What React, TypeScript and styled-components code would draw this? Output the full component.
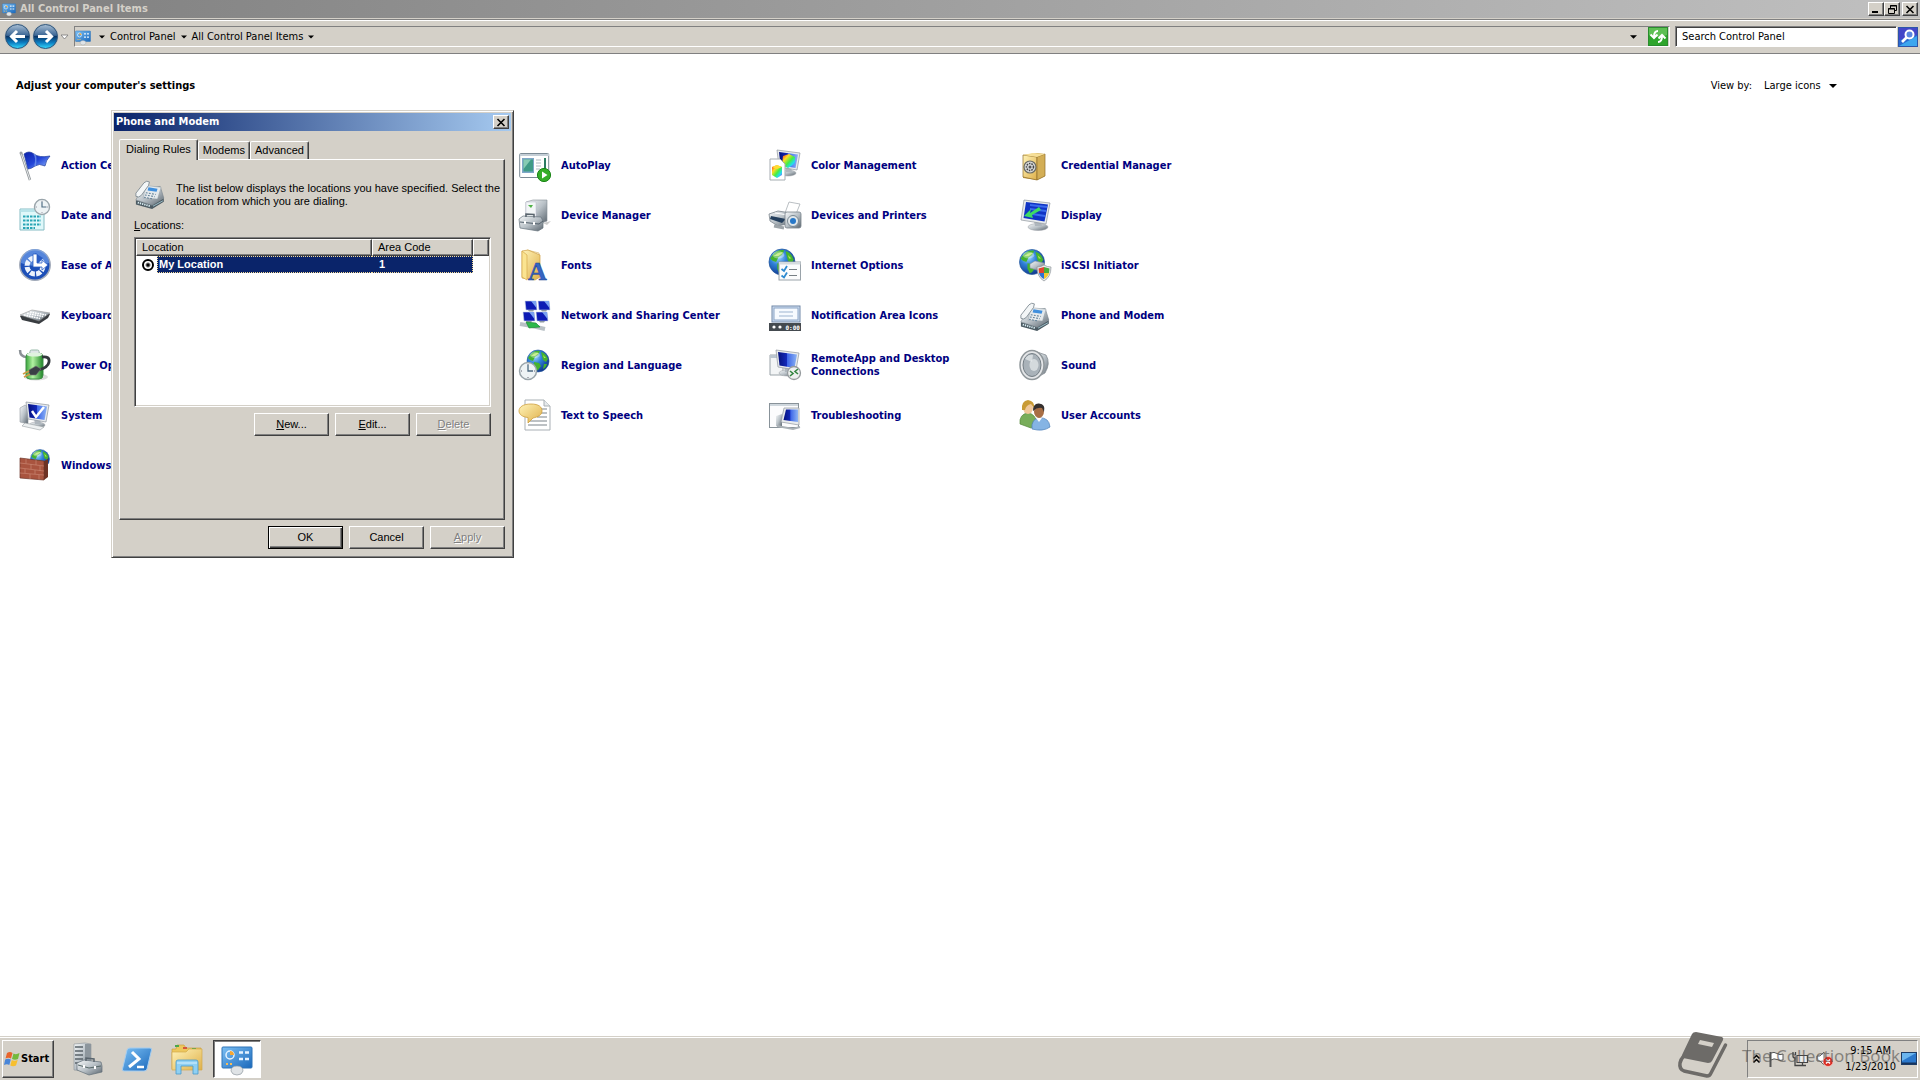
import React from "react";
import styled, { createGlobalStyle, css } from "styled-components";

const ui = `"DejaVu Sans Condensed", "DejaVu Sans", sans-serif`;
const face = "#d4d0c8";

const Global = createGlobalStyle`
  * { box-sizing: border-box; }
  body { margin: 0; background: #fff; color: #000; font: 11px/14px ${ui}; overflow: hidden; }
  button, input, select { font: inherit; color: inherit; margin: 0; padding: 0; }
  svg { display: block; flex: none; overflow: visible; }
`;

const raised = css`
  border: 1px solid;
  border-color: #fff #404040 #404040 #fff;
  box-shadow: inset -1px -1px #808080;
`;
const sunken = css`
  border: 1px solid;
  border-color: #808080 #fff #fff #808080;
`;

/* ---------- explorer window ---------- */

const Desktop = styled.div`
  min-height: 100vh;
  display: flex;
  flex-direction: column;
  position: relative;
`;
const TitleBar = styled.header`
  display: flex;
  align-items: center;
  gap: 4px;
  height: 18px;
  padding: 0 2px;
  background: linear-gradient(90deg, #808080, #c0c0c0);
  color: ${face};
  font-weight: bold;
`;
const WindowTitle = styled.h1`
  flex: 1;
  margin: 0;
  font: bold 11px/14px ${ui};
`;
const Captions = styled.div`
  display: flex;
  align-items: center;
`;
const CaptionButton = styled.button<{ $apart?: boolean }>`
  ${raised}
  width: 16px;
  height: 14px;
  margin-left: ${(p) => (p.$apart ? 2 : 0)}px;
  background: ${face};
  color: #000;
  display: grid;
  place-items: center;
`;
const Toolbar = styled.nav`
  display: flex;
  align-items: center;
  height: 36px;
  padding: 1px 2px 0 4px;
  background: ${face};
  border-top: 1px solid ${face};
  border-bottom: 1px solid #808080;
  box-shadow: inset 0 1px #808080, inset 0 2px #fff;
`;
const Plain = styled.button`
  border: 0;
  background: none;
  display: grid;
  place-items: center;
`;
const RoundPair = styled.div`
  display: flex;
  align-items: center;
  gap: 1px;
  margin-right: 5px;
`;
const Address = styled.div`
  ${sunken}
  flex: 1;
  height: 21px;
  display: flex;
  align-items: center;
  gap: 8px;
  padding-right: 1px;
`;
const Crumbs = styled.div`
  display: flex;
  align-items: center;
  gap: 5px;
`;
const Crumb = styled.a`
  color: #000;
  text-decoration: none;
`;
const AddressEnd = styled.div`
  margin-left: auto;
  display: flex;
  align-items: center;
  gap: 11px;
`;
const Search = styled.label`
  display: flex;
  align-items: center;
  margin-left: 5px;
  gap: 1px;
`;
const SearchInput = styled.input`
  width: 222px;
  height: 21px;
  padding: 0 6px;
  background: #fff;
  border: 1px solid;
  border-color: #808080 #fff #fff #808080;
  box-shadow: inset 1px 1px #404040;
  outline: 0;
  &::placeholder { color: #000; opacity: 1; }
`;
const Content = styled.main`
  flex: 1;
`;
const SettingsHead = styled.div`
  display: flex;
  align-items: center;
  justify-content: space-between;
  padding: 24px 83px 46px 16px;
`;
const Heading = styled.h2`
  margin: 0;
  font: bold 11px/16px ${ui};
`;
const ViewBy = styled.div`
  display: flex;
  align-items: center;
  gap: 12px;
`;
const ViewSelect = styled.span`
  display: flex;
  align-items: center;
  gap: 8px;
`;
const Select = styled.select`
  appearance: none;
  border: 0;
  background: none;
  outline: 0;
`;
const Items = styled.ul`
  list-style: none;
  margin: 0;
  padding: 0 19px;
  display: grid;
  grid-template-columns: repeat(5, 250px);
  grid-auto-rows: 50px;
`;
const Item = styled.li<{ $wide: boolean }>`
  grid-column: span ${(p) => (p.$wide ? 2 : 1)};
  display: flex;
  align-items: center;
`;
const ItemLink = styled.a`
  display: flex;
  align-items: center;
  gap: 10px;
  max-width: 220px;
  color: #000080;
  font: bold 11px/13px ${ui};
  text-decoration: none;
`;

/* ---------- dialog ---------- */

const Dialog = styled.section`
  position: absolute;
  left: 111px;
  top: 110px;
  width: 403px;
  padding: 2px;
  background: ${face};
  border: 1px solid;
  border-color: ${face} #404040 #404040 ${face};
  box-shadow: inset 1px 1px #fff, inset -1px -1px #808080;
  font: 11px/13px "Liberation Sans", Arial, sans-serif;
`;
const DialogTitle = styled.div`
  display: flex;
  align-items: center;
  justify-content: space-between;
  height: 18px;
  padding: 0 2px;
  color: #fff;
  background: linear-gradient(90deg, #0a246a, #a6caf0);
  font: bold 11px/14px ${ui};
`;
const DialogBody = styled.div`
  padding: 8px 6px 6px 5px;
`;
const Tabs = styled.div`
  display: flex;
  align-items: flex-end;
`;
const Tab = styled.button<{ $on?: boolean }>`
  height: ${(p) => (p.$on ? 21 : 18)}px;
  margin-bottom: ${(p) => (p.$on ? -1 : 0)}px;
  padding: 0 ${(p) => (p.$on ? 6 : 4)}px ${(p) => (p.$on ? 2 : 0)}px;
  position: relative;
  z-index: ${(p) => (p.$on ? 1 : 0)};
  background: ${face};
  border: 1px solid;
  border-color: #fff #404040 transparent #fff;
  border-bottom-width: 0;
  border-radius: 2px 2px 0 0;
  box-shadow: inset -1px 0 #808080;
`;
const Panel = styled.div`
  ${raised}
  height: 361px;
  padding: 17px 13px 0 14px;
`;
const Intro = styled.div`
  display: flex;
  gap: 10px;
  margin: 0 -10px 10px 0;
`;
const IntroText = styled.p`
  margin: 5px 0 0;
`;
const ListLabel = styled.div`
  margin-bottom: 5px;
`;
const ListBox = styled.div`
  height: 170px;
  background: #fff;
  border: 1px solid;
  border-color: #808080 #fff #fff #808080;
  box-shadow: inset 1px 1px #404040, inset -1px -1px ${face};
  padding: 1px;
`;
const Table = styled.table`
  width: 100%;
  table-layout: fixed;
  border-collapse: separate;
  border-spacing: 0;
`;
const Th = styled.th<{ $w?: number }>`
  ${raised}
  ${(p) => (p.$w ? `width: ${p.$w}px;` : "")}
  height: 17px;
  padding: 0 5px;
  background: ${face};
  font-weight: normal;
  text-align: left;
`;
const Td = styled.td`
  height: 17px;
  padding: 0;
  font-weight: bold;
`;
const Choice = styled.label`
  display: flex;
  align-items: center;
  gap: 3px;
  padding-left: 6px;
`;
const Radio = styled.input`
  appearance: none;
  width: 12px;
  height: 12px;
  border: 2px solid #000;
  border-radius: 50%;
  background: radial-gradient(circle, #000 1px, #fff 3px);
`;
const Picked = styled.span<{ $code?: boolean }>`
  display: block;
  flex: 1;
  height: 17px;
  padding: 1px ${(p) => (p.$code ? 7 : 1)}px;
  color: #fff;
  background: #0a246a;
  border: 1px dotted #f5db95;
  border-${(p) => (p.$code ? "left" : "right")}: 0;
`;
const Buttons = styled.div`
  display: flex;
  justify-content: flex-end;
  gap: 6px;
  margin-top: 6px;
`;
const Push = styled.button<{ $primary?: boolean }>`
  ${raised}
  width: 75px;
  height: 23px;
  background: ${face};
  ${(p) =>
    p.$primary &&
    css`
      border-color: #000;
      box-shadow: inset 1px 1px #fff, inset -1px -1px #404040, inset -2px -2px #808080;
    `}
  &:disabled { color: #808080; text-shadow: 1px 1px #fff; }
`;

/* ---------- taskbar ---------- */

const Taskbar = styled.footer`
  display: flex;
  align-items: center;
  height: 44px;
  padding: 1px 2px;
  background: ${face};
  border-top: 1px solid ${face};
  box-shadow: inset 0 1px #fff;
`;
const Start = styled.button`
  ${raised}
  display: flex;
  align-items: center;
  gap: 1px;
  width: 52px;
  height: 38px;
  padding-left: 1px;
  background: ${face};
  font: bold 11px/14px ${ui};
`;
const Launchers = styled.div`
  display: flex;
  align-items: center;
  gap: 2px;
  margin-left: 9px;
  flex: 1;
`;
const Launcher = styled.button<{ $active?: boolean }>`
  width: 48px;
  height: 38px;
  display: grid;
  place-items: center;
  background: ${(p) => (p.$active ? "#fff" : "none")};
  border: 1px solid transparent;
  ${(p) =>
    p.$active &&
    css`
      border-color: #404040 #fff #fff #404040;
      box-shadow: inset 1px 1px #808080;
    `}
`;
const Tray = styled.div`
  ${sunken}
  display: flex;
  align-items: center;
  gap: 8px;
  height: 38px;
  padding: 0 0 0 5px;
`;
const Clock = styled.time`
  text-align: center;
  line-height: 16px;
  margin: 0 -3px 0 3px;
`;
const Watermark = styled.div`
  position: absolute;
  right: 20px;
  bottom: 1px;
  display: flex;
  align-items: center;
  gap: 14px;
  color: rgba(80, 78, 74, 0.6);
  font: 17px/20px "Noto Sans", sans-serif;
  pointer-events: none;
`;

/* ---------- drawings ---------- */

const HiddenSvg = styled.svg`
  position: absolute;
  width: 0;
  height: 0;
`;

const Defs = () => (
  <HiddenSvg aria-hidden="true">
    <defs>
      <linearGradient id="blue" x1="0" y1="0" x2="1" y2="1">
        <stop offset="0" stopColor="#0b1fa8" /><stop offset=".5" stopColor="#2345d8" /><stop offset="1" stopColor="#9cc4ff" />
      </linearGradient>
      <linearGradient id="screen" x1="0" y1="0" x2="1" y2="0">
        <stop offset="0" stopColor="#04107c" /><stop offset=".45" stopColor="#1228b8" /><stop offset=".5" stopColor="#3d66e8" /><stop offset="1" stopColor="#8db4f4" />
      </linearGradient>
      <radialGradient id="globe" cx=".35" cy=".3" r=".8">
        <stop offset="0" stopColor="#a5dcff" /><stop offset=".4" stopColor="#2f80d8" /><stop offset="1" stopColor="#0a2b80" />
      </radialGradient>
      <linearGradient id="metal" x1="0" y1="0" x2="1" y2="1">
        <stop offset="0" stopColor="#f6f8f9" /><stop offset=".5" stopColor="#b9c1c7" /><stop offset="1" stopColor="#59646d" />
      </linearGradient>
      <linearGradient id="nav" x1="0" y1="0" x2="0" y2="1">
        <stop offset="0" stopColor="#a9bfd4" /><stop offset=".45" stopColor="#3c6796" /><stop offset=".5" stopColor="#0b3768" /><stop offset=".75" stopColor="#0c7cc0" /><stop offset="1" stopColor="#35dcff" />
      </linearGradient>
      <linearGradient id="gold" x1="0" y1="0" x2="1" y2="1">
        <stop offset="0" stopColor="#fff3b8" /><stop offset="1" stopColor="#dfb04a" />
      </linearGradient>
      <linearGradient id="green" x1="0" y1="0" x2="1" y2="0">
        <stop offset="0" stopColor="#3aa53c" /><stop offset=".4" stopColor="#b2f2a2" /><stop offset="1" stopColor="#1f8428" />
      </linearGradient>
      <linearGradient id="panel" x1="0" y1="0" x2="1" y2="1">
        <stop offset="0" stopColor="#7cc0f4" /><stop offset="1" stopColor="#1a68bb" />
      </linearGradient>
      <linearGradient id="rainbow" x1="0" y1="0" x2="1" y2="1">
        <stop offset="0" stopColor="#f22" /><stop offset=".3" stopColor="#fd2" /><stop offset=".55" stopColor="#4e4" /><stop offset=".75" stopColor="#2de" /><stop offset="1" stopColor="#b3f" />
      </linearGradient>
    </defs>
  </HiddenSvg>
);

const Globe = ({ x, y, r }: { x: number; y: number; r: number }) => (
  <g transform={`translate(${x} ${y}) scale(${r / 11})`}>
    <circle r="11" fill="url(#globe)" stroke="#24559b" strokeWidth=".6" />
    <path d="M-8-6Q-4-11 2-10L0-6-3-4-5 0-8-1-10-3ZM3-9Q8-8 10-2L8 1 5-1 4-5ZM-4 1L1 2 3 5 0 9-2 10-4 6ZM6 3L9 3Q8 7 5 8Z" fill="#45b32f" />
    <path d="M-7-5Q-3-9 1-8L-3-5ZM5-6 8-3 6-3Z" fill="#b1e659" />
    <ellipse cx="-3" cy="-6" rx="5" ry="3" fill="#fff" opacity=".35" />
  </g>
);
const Monitor = ({ x = 0, y = 0, s = 1 }: { x?: number; y?: number; s?: number }) => (
  <g transform={`translate(${x} ${y}) scale(${s})`}>
    <ellipse cx="14" cy="23" rx="8" ry="3" fill="url(#metal)" stroke="#9a9fa4" strokeWidth=".5" />
    <path d="M11 16h6l1 6h-6z" fill="#aeb6bd" />
    <path d="M3 0 26 3 23 20 5 17Z" fill="#e8ebed" stroke="#8f979e" strokeWidth=".7" />
    <path d="M5 2 24 4.500 21.500 18 6.500 15.500Z" fill="url(#screen)" />
  </g>
);
const Face = ({ x, y, r }: { x: number; y: number; r: number }) => (
  <g transform={`translate(${x} ${y}) scale(${r / 9})`}>
    <circle r="8.500" fill="#eef3f5" stroke="#9aa5ab" strokeWidth="1.500" />
    <path d="M0-6V0H5" fill="none" stroke="#4c6a80" strokeWidth="1.300" />
    <path d="M0-7v1M0 6v1M-7 0h1M6 0h1" stroke="#667" />
  </g>
);

const Phone = () => (
  <g transform="translate(1 4) scale(.9)">
    <path d="M1 21 19 26 32 19 32 23 19 31 1 26Z" fill="#4c5b63" />
    <path d="M1 21 8 8 28 6 32 19 19 27Z" fill="url(#metal)" stroke="#7b868e" strokeWidth=".7" />
    <path d="M12 5 29 7 25 20 9 19Z" fill="#e4e9ec" stroke="#8f9aa1" strokeWidth=".5" />
    <path d="M15 7 25 8.500 24 12 14 10.500Z" fill="#3f8fdd" />
    <path d="M12 13l11 2M11 15.500l11 2M10 18l10 2" stroke="#5f7f96" strokeWidth="1.200" strokeDasharray="2 1.500" />
    <path d="M1 17Q0 13 3 11L10 2Q13-1 16 1L15 5 7 16Q4 19 1 17Z" fill="#f3f6f7" stroke="#74818a" strokeWidth=".9" />
    <path d="M3 24 17 28" stroke="#d8ecf2" strokeWidth="2" strokeDasharray="1.500 1" />
    <path d="M20 28 31 22" stroke="#a5c7d3" />
  </g>
);

const art: Record<string, React.ReactNode> = {
  flag: (
    <>
      <path d="M2 4 11 31" stroke="#8f9599" strokeWidth="2.400" />
      <path d="M2 4 11 31" stroke="#e5e7e8" strokeWidth="1" />
      <circle cx="2" cy="4" r="1.500" fill="#9ba1a5" />
      <path d="M5 5Q10 1 15 5T31 7Q27 11 26 17Q20 14 16 17T9 20Z" fill="url(#blue)" stroke="#1c3b9c" strokeWidth=".7" />
      <path d="M15 5Q18 8 16 17" fill="none" stroke="#7aa0f0" strokeWidth="1.500" opacity=".7" />
    </>
  ),
  date: (
    <>
      <path d="M1 10H25V31H1Z" fill="#dff8fa" stroke="#86bcc4" />
      <path d="M1.500 10.500H24.500V13H1.500Z" fill="#b9e4ea" />
      <path d="M4 17.500H22M4 21.500H22M4 25.500H22M4 29H16" stroke="#29a5b5" strokeWidth="2.200" strokeDasharray="2.500 1" />
      <Face x={23} y={8} r={8} />
    </>
  ),
  ease: (
    <>
      <circle cx="16" cy="16" r="15.200" fill="#1c4fb8" stroke="#a2aab8" strokeWidth="1.500" />
      <path d="M2 14A14 14 0 0 1 30 14Q16 20 2 14Z" fill="#6f9eea" opacity=".7" />
      <circle cx="16" cy="17" r="8" fill="none" stroke="#edf3fc" strokeWidth="5" strokeDasharray="5 1.300" />
      <path d="M16 4 24 9 18 15Z" fill="#2a5dc4" />
      <path d="M14 5h4v9h5v-3l6 5-6 5v-3h-9Z" fill="#fff" stroke="#2a5dc4" strokeWidth=".8" />
    </>
  ),
  keyboard: (
    <>
      <path d="M1 17 14 12 31 15 29 19 20 25 3 21Z" fill="#393d41" />
      <path d="M1 16 13 11 31 14 20 22Z" fill="url(#metal)" stroke="#888" strokeWidth=".5" />
      <path d="M5 16 21 19.500M8 14.500 24 17.500M11 13 27 16" stroke="#fff" strokeWidth="1.500" strokeDasharray="1.800 .7" />
    </>
  ),
  power: (
    <>
      <ellipse cx="17" cy="28" rx="12" ry="3.500" fill="#ccc" opacity=".7" />
      <path d="M1 1Q1 8 8 8" fill="none" stroke="#8b9196" strokeWidth="2.500" />
      <rect x="7" y="4" width="17" height="26" rx="4" fill="url(#green)" stroke="#3f8f46" />
      <rect x="11" y="1" width="9" height="4" rx="1.500" fill="#dfe5e8" stroke="#9ba" />
      <ellipse cx="15.500" cy="5.500" rx="8" ry="2" fill="#dff3df" />
      <path d="M23 8Q31 7 30 13T19 21" fill="none" stroke="#33383d" strokeWidth="2.800" />
      <path d="M10 21 17 17 22 20 17 26 10 26Z" fill="#3a3f45" stroke="#777" strokeWidth=".6" />
      <path d="M4 25 10 22M5 28 11 25" stroke="#cf9a44" strokeWidth="1.800" />
    </>
  ),
  system: (
    <>
      <path d="M1 9 6 6 9 8V25L1 23Z" fill="url(#metal)" stroke="#959ca1" strokeWidth=".6" />
      <Monitor x={4} y={3} />
      <path d="M13 12 17 18 25 8" fill="none" stroke="#fff" strokeWidth="2.500" />
      <path d="M6 24 25 28 21 31 3 27Z" fill="#eef1f2" stroke="#9ba1a5" strokeWidth=".6" />
    </>
  ),
  firewall: (
    <>
      <Globe x={21} y={10} r={9.500} />
      <path d="M1 9 25 12V31L1 29Z" fill="#a9543f" stroke="#6d3528" strokeWidth=".7" />
      <path d="M25 12 29 10V28L25 31Z" fill="#6d3224" />
      <path d="M1 14 25 17M1 19 25 22M1 24 25 26M7 10V14.500M17 11V16M12 15V20M21 17V22M6 20V24M16 21V25M11 25V30M20 26V30.500" stroke="#cf8d79" strokeWidth=".6" />
    </>
  ),
  autoplay: (
    <>
      <rect x=".7" y="4.500" width="29" height="24" rx="1" fill="#fff" stroke="#7c8b95" />
      <path d="M1 5H30V7H1Z" fill="#c4ced6" />
      <path d="M3 9H15V24H3Z" fill="#7fa7c8" /><path d="M4.500 10.500H14V22.500H4.500Z" fill="#3f9b86" /><path d="M4.500 10.500H12L4.500 20Z" fill="#86cbb3" />
      <path d="M17 11h5M17 14h5M17 17h5M17 20h4" stroke="#aeb9c0" /><path d="M26 9V20" stroke="#2c7b62" strokeWidth="2" />
      <circle cx="25" cy="26" r="6.600" fill="#35ad27" stroke="#1c8618" /><path d="M23 22.500 28.500 26 23 29.500Z" fill="#fff" />
    </>
  ),
  device: (
    <>
      <path d="M7 3 14 1 28 1 28 22 20 25 7 22Z" fill="url(#metal)" stroke="#858d93" strokeWidth=".6" />
      <path d="M7 3 17 3V22H7Z" fill="#f3f6f7" stroke="#bbc" strokeWidth=".5" /><path d="M9 6 14 6 12 9Z" fill="#51b247" />
      <path d="M24 24 32 22 28 26Z" fill="#ccc" />
      <path d="M0 20 4 17 22 18 24 22V29L19 32 1 29Z" fill="url(#metal)" stroke="#66727c" strokeWidth=".7" />
      <path d="M7 18V15L15 15.500V18.500" fill="none" stroke="#59646d" strokeWidth="1.500" />
      <path d="M1 23 20 25 24 22" fill="none" stroke="#54616c" /><path d="M6 22v3M15 23v3" stroke="#fff" strokeWidth="2" />
    </>
  ),
  fonts: (
    <>
      <path d="M8 1 20 4V26H8Z" fill="#fff" stroke="#d8b562" strokeWidth=".7" />
      <path d="M3 2 9 1 21 6V28L16 31 3 29Z" fill="url(#gold)" stroke="#cf9f43" strokeWidth=".7" />
      <path d="M3 2 8 6V31L3 28Z" fill="#fbe491" stroke="#d5a94c" strokeWidth=".7" />
      <text x="9" y="31" fontFamily="Liberation Serif, serif" fontSize="26" fontWeight="bold" fill="#3565c4" stroke="#1d3e8e" strokeWidth=".5">A</text>
    </>
  ),
  network: (
    <>
      {[[5, 2], [18, 2], [3, 13], [16, 13]].map(([x, y]) => (
        <g key={`${x}-${y}`} transform={`translate(${x} ${y})`}>
          <path d="M1 0H12L13 9H2Z" fill="#0d1bb4" stroke="#c6d4e4" strokeWidth=".6" />
          <path d="M7 0H12L12.500 7Z" fill="#7aa1f1" /><path d="M4 9H10L9 10.500H5Z" fill="#8e99a3" />
        </g>
      ))}
      <path d="M1 25 13 27 26 30" stroke="#b9c1c6" strokeWidth="4" />
      <path d="M7 23 17 24 21 28 10 29Z" fill="#2cb84a" stroke="#14802b" strokeWidth=".6" />
    </>
  ),
  region: (<><Globe x={19} y={12} r={11} /><Face x={9} y={22} r={9} /></>),
  speech: (
    <>
      <path d="M6 1H25L31 7V31H6Z" fill="#fff" stroke="#a9b0b5" /><path d="M25 1V7H31" fill="#e5e9ec" stroke="#a9b0b5" />
      <path d="M15 10H28M20 14H28M18 18H28M9 22H28M9 26H28" stroke="#7b8389" />
      <path d="M12 5C20 5 23 8 23 12C23 16 19 18 14 19L9 24 9 18.500C3 18 0 15 0 12C0 8 4 5 12 5Z" fill="url(#gold)" stroke="#ce9e3c" strokeWidth=".8" />
    </>
  ),
  color: (
    <>
      <Monitor x={5} y={1} />
      <path d="M14 7 20 5 26 8V15L19 19 13 16Z" fill="url(#rainbow)" />
      <path d="M1 10H11L16 15V31H1Z" fill="#fff" stroke="#a6adb2" />
      <path d="M3 18 8 16 13 18V26L8 29 3 26Z" fill="url(#rainbow)" /><path d="M3 18 8 20 13 18 8 16Z" fill="#fd3" />
    </>
  ),
  printers: (
    <>
      <path d="M16 14 20 3 31 5 27 15Z" fill="#fff" stroke="#a8afb4" strokeWidth=".8" />
      <path d="M0 15 9 12 22 14 22 24 9 27 1 22Z" fill="url(#metal)" stroke="#6d777f" strokeWidth=".7" />
      <path d="M2 17 17 20 13 24 1 20Z" fill="#243f5d" /><path d="M6 14 19 16" stroke="#fff" />
      <rect x="16" y="13" width="16" height="16" rx="2" fill="url(#metal)" stroke="#79838b" strokeWidth=".8" />
      <circle cx="24" cy="22" r="5.500" fill="#dfe6ea" stroke="#7a8891" /><circle cx="24" cy="22" r="3" fill="#2878c8" />
      <path d="M5 27 15 29" stroke="#9da4a9" strokeWidth="3" />
    </>
  ),
  internet: (
    <>
      <Globe x={13} y={13} r={13} />
      <rect x="10" y="13" width="21.500" height="18" fill="#fbfcfd" stroke="#9aa3aa" /><path d="M10 13H31.500V15.500H10Z" fill="#d5dbdf" />
      <path d="M12.500 20 15 22 18 17M12.500 26.500 15 28.500 18 23.500" fill="none" stroke="#2f8bd0" strokeWidth="1.800" />
      <path d="M20 20.500H28M20 26.500H28" stroke="#777f85" />
    </>
  ),
  tray: (
    <>
      <rect x="3" y="7" width="28" height="16" fill="#d2e0f2" stroke="#7088a8" /><rect x="5" y="9" width="24" height="12" fill="#f6faff" stroke="#8aa4c6" />
      <path d="M10 13H24M10 17H24" stroke="#9db4d0" />
      <path d="M0 24H32V32H0Z" fill="#444a4f" /><circle cx="5" cy="28" r="1.600" fill="#fff" /><circle cx="11" cy="28" r="1.600" fill="#fff" />
      <text x="16.500" y="30.500" fontFamily="DejaVu Sans Mono, monospace" fontSize="6" fontWeight="bold" fill="#fff">0:00</text>
    </>
  ),
  remote: (
    <>
      <path d="M1 6H14V26H1Z" fill="#f3f5f6" stroke="#9aa3a9" /><path d="M1 6H14V9H1Z" fill="#bac5cf" />
      <Monitor x={4} y={1} />
      <circle cx="25" cy="24" r="6.500" fill="#eef0f0" stroke="#969b9e" strokeWidth="1.300" />
      <path d="M21 22 24 24.500 21 27M29 20 26 22.500 29 25" fill="none" stroke="#348541" strokeWidth="1.600" />
    </>
  ),
  trouble: (
    <>
      <rect x=".5" y="4.500" width="29" height="24" fill="#fcfcfd" stroke="#889299" /><path d="M1 5H29V7H1Z" fill="#cfd7dd" />
      <path d="M7 17 13 15V28L7 27Z" fill="url(#metal)" />
      <path d="M15 9H30V26L12 23Z" fill="#e8ebed" stroke="#8f979e" strokeWidth=".7" /><path d="M17 10.500H29V23L14.500 21Z" fill="url(#screen)" />
      <path d="M8 27 24 30 31 28" fill="none" stroke="#aab1b6" strokeWidth="2" />
    </>
  ),
  credential: (
    <>
      <path d="M4 6 18 4 26 5V27L18 31 4 29Z" fill="#c29b45" /><path d="M4 6 18 8V31L4 28Z" fill="url(#gold)" stroke="#8f6d2a" strokeWidth=".7" />
      <path d="M18 8 26 5V27L18 31Z" fill="#d3ae56" stroke="#8f6d2a" strokeWidth=".7" /><path d="M4 6 14 4 26 5 18 8Z" fill="#f6df98" />
      <circle cx="11" cy="18" r="6" fill="#d8dadb" stroke="#6b6b64" strokeWidth="1.200" /><circle cx="11" cy="18" r="3.500" fill="none" stroke="#444" strokeWidth="1.500" strokeDasharray="1.500 1" /><circle cx="11" cy="18" r="1.500" fill="#555" />
    </>
  ),
  display: (
    <>
      <ellipse cx="19" cy="28" rx="10" ry="3.500" fill="url(#metal)" stroke="#9a9fa4" strokeWidth=".5" />
      <path d="M15 22h7l1 5h-7z" fill="#aeb6bd" />
      <path d="M5 1 31 4 27 25 2 21Z" fill="#e8ebed" stroke="#8f979e" strokeWidth=".7" />
      <path d="M7 3 29 5.500 25.500 22.500 4.500 19Z" fill="#1034c4" /><path d="M11 6 28 8M11 10 27 12M13 15 26 17" stroke="#3a6bee" strokeWidth="2" />
      <path d="M20 8 11 14 12 10 5 17 14 19 13 16 22 11Z" fill="#3ddb63" />
    </>
  ),
  iscsi: (
    <>
      <Globe x={13} y={13} r={12.500} />
      <path d="M11 15 16 12 25 14V19L18 21 11 19Z" fill="url(#metal)" stroke="#8a939a" strokeWidth=".6" />
      <path d="M18 18Q22 18 25 16Q28 18 32 18Q32 28 25 32Q18 28 18 18Z" fill="#e8eaec" stroke="#8d9499" strokeWidth=".7" />
      <path d="M19.500 19.500 25 18V24H20Z" fill="#e2452f" /><path d="M25 18 30.500 19.500 30 24H25Z" fill="#49ad3c" /><path d="M20 24H25V30Q21 28 20 24Z" fill="#2f72d4" /><path d="M25 24H30Q29 28 25 30Z" fill="#f4c830" />
    </>
  ),
  phone: <Phone />,
  sound: (
    <>
      <path d="M15 2 27 6Q32 14 26 24L15 30Z" fill="url(#metal)" stroke="#7f878c" strokeWidth=".7" />
      <ellipse cx="13" cy="16" rx="12" ry="14.500" fill="#e4e6e8" stroke="#90979b" strokeWidth="1.500" />
      <ellipse cx="13" cy="16" rx="9" ry="11.500" fill="#a9b2b9" stroke="#737d84" />
      <ellipse cx="15" cy="16" rx="4.500" ry="6" fill="#d4dadd" /><path d="M6 10Q9 5 14 6L13 13Z" fill="#e8ecee" opacity=".7" />
    </>
  ),
  users: (
    <>
      <path d="M1 25Q0 15 9 14Q17 15 18 25L12 29Z" fill="#78ad5a" stroke="#55873b" strokeWidth=".7" />
      <ellipse cx="9" cy="9" rx="5" ry="6" fill="#efc79a" /><path d="M3 11Q2 2 9 1Q16 2 15 9L12 5Q7 6 6 11Z" fill="#c99b35" />
      <path d="M13 30Q12 20 20 19Q30 18 31 28Q24 33 13 30Z" fill="#85b4e4" stroke="#4d7fb8" strokeWidth=".7" />
      <ellipse cx="20" cy="12.500" rx="5" ry="6.500" fill="#a86e45" /><path d="M14 12Q14 4 20 4.500Q27 5 25 13L23 9Q18 8 14 12Z" fill="#35302f" />
      <path d="M17 19 20 23 23 19Z" fill="#fff" />
    </>
  ),
  cpl: (
    <>
      <rect x="1" y="4" width="30" height="21" rx="1" fill="url(#panel)" stroke="#2f74b8" />
      <circle cx="9" cy="12" r="4" fill="none" stroke="#e3f2ff" strokeWidth="1.500" /><path d="M9 8A4 4 0 0 1 13 12H9Z" fill="#f6a734" />
      <path d="M18 9.500h4M24 9.500h4M18 16h4M24 16h4" stroke="#e6f3ff" strokeWidth="2.500" /><path d="M5 21h2M9 21h2" stroke="#f9bd55" strokeWidth="2" />
      <path d="M10 28Q10 23 16 23T22 28Q21 32 16 32T10 28Z" fill="#dfe3e6" stroke="#9199a0" strokeWidth=".7" />
    </>
  ),
  server: (
    <>
      <path d="M3 1 14 0 20 1V20L12 28 3 27Z" fill="url(#metal)" stroke="#8b9297" strokeWidth=".6" />
      <path d="M14 1 20 1V20L14 22Z" fill="#8d969d" />
      <path d="M4 4H12M4 8H12M4 12H12M4 16H12M4 20H12" stroke="#59636a" strokeWidth="1.500" />
      <path d="M6 20 13 17 30 19 31 23V29L18 32 6 27Z" fill="url(#metal)" stroke="#626e78" strokeWidth=".7" />
      <path d="M15 18V15L23 16V19" fill="none" stroke="#59646d" strokeWidth="1.500" /><path d="M7 22 18 25 30 23" fill="none" stroke="#566" /><path d="M13 22v3M24 23v3" stroke="#fff" strokeWidth="2" />
    </>
  ),
  shell: (
    <>
      <path d="M9 5H29Q31 5 30.500 7L26 26Q25.500 28 23 28H3Q1 28 1.500 26L6 7Q6.500 5 9 5Z" fill="url(#panel)" stroke="#a5cdf0" />
      <path d="M11 9 18 16 8 24" fill="none" stroke="#fff" strokeWidth="3" /><path d="M16 24H23" stroke="#fff" strokeWidth="2.500" />
    </>
  ),
  explorer: (
    <>
      <path d="M1 6H5L6 2H13L15 5H30V26H1Z" fill="#edc75c" stroke="#cba040" strokeWidth=".7" />
      <path d="M4 3h4M21 6h4" stroke="#4aa74b" strokeWidth="2" /><path d="M12 5h4" stroke="#d5563c" strokeWidth="2" />
      <path d="M1 9H15L18 6H31V27H1Z" fill="url(#gold)" stroke="#d3aa4a" strokeWidth=".7" />
      <path d="M5 31V19Q5 17 7 17H25Q27 17 27 19V31H22V23H10V31Z" fill="#8fd0f3" stroke="#4a9ac9" strokeWidth=".8" />
      <path d="M6 20H26" stroke="#d8f1ff" />
    </>
  ),
};

const Icon = ({ name, size = 32 }: { name: string; size?: number }) => (
  <svg width={size} height={size} viewBox="0 0 32 32" aria-hidden="true">{art[name]}</svg>
);
const Caret = ({ w = 7 }: { w?: number }) => (
  <svg width={w} height="4" viewBox="0 0 8 4" aria-hidden="true"><path d="M0 0H8L4 4Z" /></svg>
);
const RoundArrow = ({ forward }: { forward?: boolean }) => (
  <svg width="27" height="27" viewBox="0 0 27 27" aria-hidden="true">
    <circle cx="13.500" cy="13.500" r="13" fill="#bfc2c2" />
    <circle cx="13.500" cy="13.500" r="12" fill="url(#nav)" stroke="#31577c" />
    <path transform={forward ? "translate(27 0) scale(-1 1)" : undefined} d="M21 13.500H8M13 8 7.500 13.500 13 19" fill="none" stroke="#fff" strokeWidth="3" />
  </svg>
);
const WindowsLogo = () => (
  <svg width="16" height="16" viewBox="0 0 16 16" aria-hidden="true">
    <path d="M3 2Q6 0 8.500 2L7 7.500Q4.500 6 1.500 7.500Z" fill="#e8642c" />
    <path d="M9.500 2.500Q12 4 15.500 2L14 8Q11 9.500 8 8Z" fill="#74b93c" />
    <path d="M1.200 8.500Q4 7 6.800 8.500L5.300 14Q3 12.500 0 14Z" fill="#4a86d8" />
    <path d="M7.800 9Q10 10.500 13.700 9L12 14.500Q9 16 6.300 14.500Z" fill="#f7bf2f" />
  </svg>
);
const CloseGlyph = () => (
  <svg width="8" height="7" viewBox="0 0 8 7"><path d="M.5 0 7.500 7M7.500 0 .5 7" stroke="#000" strokeWidth="1.600" /></svg>
);

const items: [string, string][] = [
  ["flag", "Action Center"], ["autoplay", "AutoPlay"], ["color", "Color Management"], ["credential", "Credential Manager"],
  ["date", "Date and Time"], ["device", "Device Manager"], ["printers", "Devices and Printers"], ["display", "Display"],
  ["ease", "Ease of Access Center"], ["fonts", "Fonts"], ["internet", "Internet Options"], ["iscsi", "iSCSI Initiator"],
  ["keyboard", "Keyboard"], ["network", "Network and Sharing Center"], ["tray", "Notification Area Icons"], ["phone", "Phone and Modem"],
  ["power", "Power Options"], ["region", "Region and Language"], ["remote", "RemoteApp and Desktop Connections"], ["sound", "Sound"],
  ["system", "System"], ["speech", "Text to Speech"], ["trouble", "Troubleshooting"], ["users", "User Accounts"],
  ["firewall", "Windows Firewall"],
];

export default function App() {
  return (
    <Desktop>
      <Global />
      <Defs />
      <TitleBar>
        <Icon name="cpl" size={14} />
        <WindowTitle>All Control Panel Items</WindowTitle>
        <Captions>
          <CaptionButton aria-label="Minimize"><svg width="8" height="7"><path d="M0 5H6V7H0Z" /></svg></CaptionButton>
          <CaptionButton aria-label="Restore">
            <svg width="9" height="9" viewBox="0 0 9 9" fill="none" stroke="#000"><path d="M2.500 3V.5H8.500V5.500H6.500M2 1H9M.5 3.500H6.500V8.500H.5ZM0 4H7" /></svg>
          </CaptionButton>
          <CaptionButton $apart aria-label="Close"><CloseGlyph /></CaptionButton>
        </Captions>
      </TitleBar>
      <Toolbar>
        <RoundPair>
          <Plain aria-label="Back"><RoundArrow /></Plain>
          <Plain aria-label="Forward"><RoundArrow forward /></Plain>
          <Plain aria-label="Recent pages">
            <svg width="9" height="6" viewBox="0 0 9 6"><path d="M1 1H8L4.500 5Z" fill="#fff" stroke="#777" strokeWidth=".8" /></svg>
          </Plain>
        </RoundPair>
        <Address>
          <Icon name="cpl" size={16} />
          <Crumbs>
            <Caret w={6} />
            <Crumb href="#control-panel">Control Panel</Crumb>
            <Caret w={6} />
            <Crumb href="#all-items">All Control Panel Items</Crumb>
            <Caret w={6} />
          </Crumbs>
          <AddressEnd>
            <Plain aria-label="Previous locations"><Caret /></Plain>
            <Plain aria-label="Refresh">
              <svg width="20" height="19" viewBox="0 0 20 19">
                <rect x=".5" y=".5" width="19" height="18" fill="#2ea52c" stroke="#2a8c2e" /><path d="M1 1H19V8Q10 12 1 8Z" fill="#7fd16f" opacity=".6" />
                <path d="M10 4Q6 4 6 10M2.500 7.500 6 11 9.500 7.500M10 15Q14 15 14 9M10.500 11.500 14 8 17.500 11.500" fill="none" stroke="#fff" strokeWidth="2" />
              </svg>
            </Plain>
          </AddressEnd>
        </Address>
        <Search>
          <SearchInput aria-label="Search Control Panel" placeholder="Search Control Panel" />
          <Plain aria-label="Search">
            <svg width="20" height="20" viewBox="0 0 20 20">
              <rect x=".5" y=".5" width="19" height="19" fill="#2a6ad0" stroke="#2d55a8" /><path d="M1 1H19V8L1 13Z" fill="#4346c8" /><path d="M1 19 19 9V19Z" fill="#3ca6ee" />
              <circle cx="11.500" cy="7.500" r="4" fill="#5b86e0" stroke="#fff" strokeWidth="2" /><path d="M8.500 10.500 4 15" stroke="#fff" strokeWidth="2.600" />
            </svg>
          </Plain>
        </Search>
      </Toolbar>

      <Content>
        <SettingsHead>
          <Heading>Adjust your computer's settings</Heading>
          <ViewBy>
            <label htmlFor="view">View by:</label>
            <ViewSelect>
              <Select id="view"><option>Large icons</option></Select>
              <Caret w={8} />
            </ViewSelect>
          </ViewBy>
        </SettingsHead>
        <Items>
          {items.map(([icon, label], i) => (
            <Item key={label} $wide={i % 4 === 0}>
              <ItemLink href={`#${icon}`}><Icon name={icon} />{label}</ItemLink>
            </Item>
          ))}
        </Items>
      </Content>

      <Dialog role="dialog" aria-label="Phone and Modem">
        <DialogTitle>
          Phone and Modem
          <CaptionButton aria-label="Close dialog"><CloseGlyph /></CaptionButton>
        </DialogTitle>
        <DialogBody>
          <Tabs role="tablist">
            <Tab role="tab" aria-selected $on>Dialing Rules</Tab>
            <Tab role="tab">Modems</Tab>
            <Tab role="tab">Advanced</Tab>
          </Tabs>
          <Panel role="tabpanel">
            <Intro>
              <Icon name="phone" />
              <IntroText>The list below displays the locations you have specified. Select the location from which you are dialing.</IntroText>
            </Intro>
            <ListLabel id="locations"><u>L</u>ocations:</ListLabel>
            <ListBox>
              <Table aria-labelledby="locations">
                <thead>
                  <tr><Th $w={236}>Location</Th><Th $w={101}>Area Code</Th><Th aria-label="Spacer" /></tr>
                </thead>
                <tbody>
                  <tr>
                    <Td><Choice><Radio type="radio" name="location" defaultChecked /><Picked>My Location</Picked></Choice></Td>
                    <Td><Picked $code>1</Picked></Td>
                    <Td />
                  </tr>
                </tbody>
              </Table>
            </ListBox>
            <Buttons>
              <Push><u>N</u>ew...</Push>
              <Push><u>E</u>dit...</Push>
              <Push disabled><u>D</u>elete</Push>
            </Buttons>
          </Panel>
          <Buttons>
            <Push $primary>OK</Push>
            <Push>Cancel</Push>
            <Push disabled><u>A</u>pply</Push>
          </Buttons>
        </DialogBody>
      </Dialog>

      <Taskbar>
        <Start><WindowsLogo />Start</Start>
        <Launchers>
          <Launcher aria-label="Server Manager"><Icon name="server" /></Launcher>
          <Launcher aria-label="PowerShell"><Icon name="shell" /></Launcher>
          <Launcher aria-label="Explorer"><Icon name="explorer" /></Launcher>
          <Launcher $active aria-label="Control Panel"><Icon name="cpl" /></Launcher>
        </Launchers>
        <Tray>
          <svg width="7" height="10" viewBox="0 0 7 10" fill="none" stroke="#000" strokeWidth="1.500"><path d="M.5 4.500 3.500 1.500 6.500 4.500M.5 8.500 3.500 5.500 6.500 8.500" /></svg>
          <svg width="16" height="16" viewBox="0 0 16 16"><path d="M2.500 1V16" stroke="#555" strokeWidth="2" /><path d="M3 2Q6 .5 9 2.500T15 3V9Q12 10 9 8.500T3 9Z" fill="#fff" stroke="#555" /></svg>
          <svg width="16" height="16" viewBox="0 0 16 16"><path d="M5 4.500H15.500V11.500H5Z" fill="#eee" stroke="#444" strokeWidth="1.200" /><path d="M7 14.500H14M10.500 12V14M1 1V5Q1 7 3 7V14.500H7M3.500 1V4" fill="none" stroke="#444" strokeWidth="1.300" /></svg>
          <svg width="18" height="16" viewBox="0 0 18 16"><path d="M1 5H4L8 1V14L4 10H1Z" fill="#fff" stroke="#666" /><circle cx="12" cy="10.500" r="5" fill="#d92c22" stroke="#f7c5c0" strokeWidth=".8" /><path d="M10 8.500 14 12.500M14 8.500 10 12.500" stroke="#fff" strokeWidth="1.500" /></svg>
          <Clock>9:15 AM<br />1/23/2010</Clock>
          <svg width="16" height="13" viewBox="0 0 16 13"><rect x=".5" y=".5" width="15" height="12" fill="#2b78cc" stroke="#1d3c66" /><path d="M1 1H15L1 9Z" fill="#6bb5ee" /><path d="M1 10.500H15V12H1Z" fill="#16345e" /></svg>
        </Tray>
      </Taskbar>

      <Watermark>
        <svg width="50" height="47" viewBox="0 0 50 47">
          <path fill={face} d="M4 27 34 33 47 9 47 14 33 41 4 36Z" />
          <path fill="#6d6b68" d="M18 0 44 5Q46 6 45 8L34 29Q33 31 30 31L5 26Q3 25 4 23L14 2Q15 0 18 0Z" />
          <path fill="none" stroke="#6d6b68" strokeWidth="3.500" strokeLinejoin="round" strokeLinecap="round" d="M47.500 13 33 41Q32 44 29 44L6 39Q1 37 2 31Q3 27 5 25" />
          <path fill={face} d="M22 8 36 11 34 15 20 12Z" />
        </svg>
        The Collection Book
      </Watermark>
    </Desktop>
  );
}
